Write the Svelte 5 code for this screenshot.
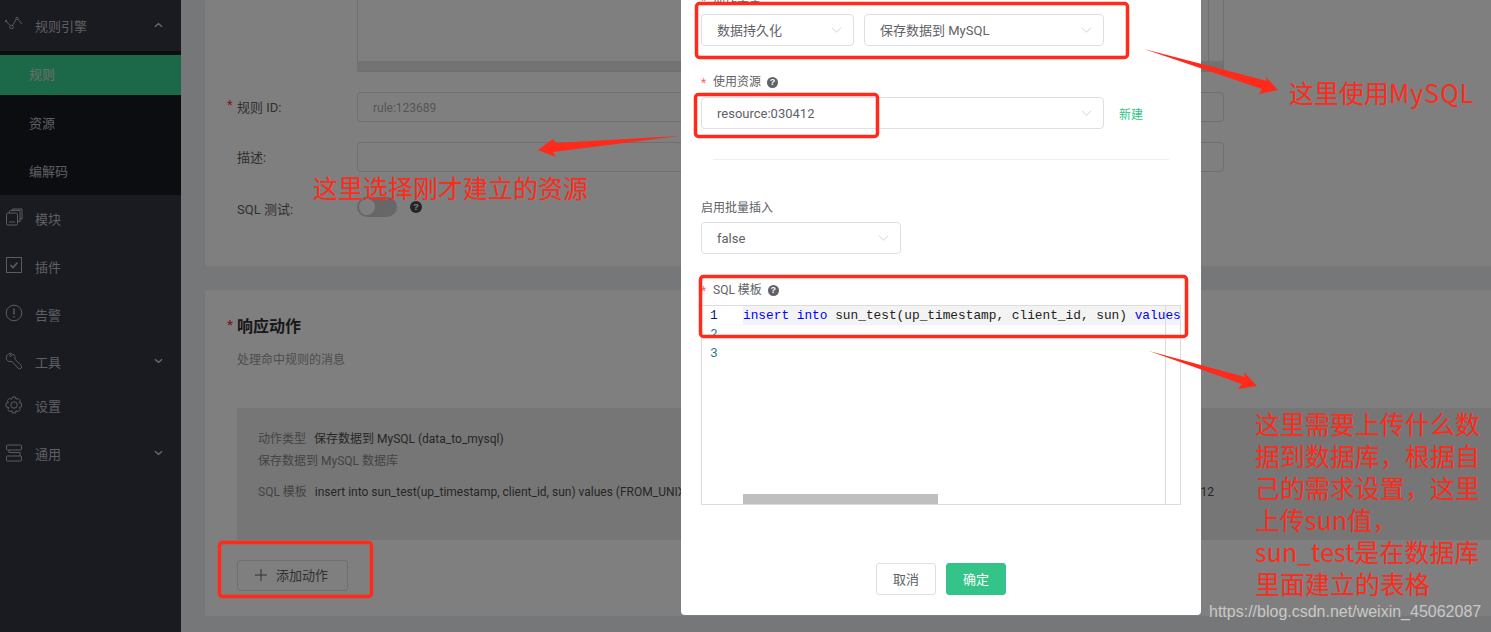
<script>
  const subItems = [
    { label: '规则', active: true },
    { label: '资源' },
    { label: '编解码' }
  ];
  const codeLines = [1, 2, 3];
</script>

<div class="page">
  <aside class="sidebar">
    <div class="nav-item top">
      <svg class="ico" viewBox="0 0 18 18"><path d="M1 5 5 9.500M7.500 9.500 11 3.500M13 3.500 17 8" /><circle cx="6.500" cy="11" r="1.800" /><circle cx="12" cy="2.500" r="1.200" /><circle cx="1" cy="5" r=".8" /></svg>
      <span>规则引擎</span>
      <svg class="caret" viewBox="0 0 10 6"><path d="M1 5 5 1.500 9 5" /></svg>
    </div>
    <div class="submenu">
      {#each subItems as item}
        <div class="sub-item" class:active={item.active}>{item.label}</div>
      {/each}
    </div>
    <div class="nav-item low">
      <svg class="ico" viewBox="0 0 18 18"><rect x="1.500" y="5" width="11" height="12" rx="1.500" /><path d="M4.500 5V3.200Q4.500 2.500 5.500 2.500H15V13.500H12.500M7.500 2.500V1H17V11H15M4 14H10" /></svg>
      <span>模块</span>
    </div>
    <div class="nav-item low">
      <svg class="ico" viewBox="0 0 18 18"><rect x="1.500" y="1.500" width="15" height="15" /><path d="M5.500 9 8 11.500 12.500 6.500" stroke-width="1.600" /></svg>
      <span>插件</span>
    </div>
    <div class="nav-item low">
      <svg class="ico" viewBox="0 0 18 18"><circle cx="9" cy="9" r="7.800" /><path d="M9 4.500v6M9 12v1.500" stroke-width="1.400" /></svg>
      <span>告警</span>
    </div>
    <div class="nav-item short">
      <svg class="ico" viewBox="0 0 18 18"><path d="M6.500 1.200a4.800 4.800 0 0 0-5 6.300A4.800 4.800 0 0 0 7 9.500l6 6.600a2 2 0 0 0 3.200-2.700L10 7.300A5 5 0 0 0 8 2L5.500 4.800 4.500 4 6.500 1.200Z" /></svg>
      <span>工具</span>
      <svg class="caret" viewBox="0 0 10 6"><path d="M1 1 5 4.500 9 1" /></svg>
    </div>
    <div class="nav-item">
      <svg class="ico" viewBox="0 0 18 18"><circle cx="9" cy="9" r="3.200" /><path d="M7.500 1h3l.5 2.300 2-1 2.200 2.200-1 2 2.300.7v3.600l-2.300.7 1 2-2.200 2.200-2-1-.5 2.300h-3l-.5-2.300-2 1-2.200-2.200 1-2L1 10.800V7.200l2.300-.7-1-2 2.200-2.200 2 1Z" /></svg>
      <span>设置</span>
    </div>
    <div class="nav-item">
      <svg class="ico" viewBox="0 0 18 18"><rect x="1.500" y="1" width="15" height="5" rx="1" /><rect x="1.500" y="12" width="15" height="5" rx="1" /><path d="M4 6v2.500h11V12" /></svg>
      <span>通用</span>
      <svg class="caret" viewBox="0 0 10 6"><path d="M1 1 5 4.500 9 1" /></svg>
    </div>
  </aside>

  <main class="main">
    <section class="card first">
      <div class="row sql-row">
        <div class="label"></div>
        <div class="textarea"><div class="ta-bar"></div></div>
      </div>
      <div class="row">
        <div class="label"><i class="star">*</i>规则 ID:</div>
        <div class="input muted">rule:123689</div>
      </div>
      <div class="row">
        <div class="label">描述:</div>
        <div class="input"></div>
      </div>
      <div class="row toggle-row">
        <div class="label">SQL 测试:</div>
        <div class="toggle"><span class="knob"></span></div>
        <span class="help dark">?</span>
      </div>
    </section>

    <section class="card second">
      <h2 class="title"><i class="star">*</i>响应动作</h2>
      <p class="sub">处理命中规则的消息</p>
      <div class="action-box">
        <div class="action-line"><span class="k">动作类型</span><span class="v">保存数据到 MySQL (data_to_mysql)</span></div>
        <div class="action-line desc">保存数据到 MySQL 数据库</div>
        <div class="action-line tmpl">
          <span><span class="k">SQL 模板</span><span class="v">insert into sun_test(up_timestamp, client_id, sun) values (FROM_UNIXTIME(up_timestamp/1000), client_id, sun)</span></span>
          <span class="v end">resource:030412</span>
        </div>
      </div>
      <button class="add-btn"><svg viewBox="0 0 12 12"><path d="M6 0v12M0 6h12" /></svg>添加动作</button>
    </section>
  </main>

  <div class="mask"></div>

  <div class="modal">
    <div class="m-label"><i class="m-star">*</i>动作类型</div>
    <div class="m-row">
      <div class="select w153">数据持久化<svg class="chev" viewBox="0 0 14 8"><path d="M1 1 7 7 13 1" /></svg></div>
      <div class="select w240">保存数据到 MySQL<svg class="chev" viewBox="0 0 14 8"><path d="M1 1 7 7 13 1" /></svg></div>
    </div>
    <div class="m-label res"><i class="m-star">*</i>使用资源<span class="help">?</span></div>
    <div class="m-row center">
      <div class="select w403">resource:030412<svg class="chev" viewBox="0 0 14 8"><path d="M1 1 7 7 13 1" /></svg></div>
      <a class="link" href="#new">新建</a>
    </div>
    <div class="divider"></div>
    <div class="m-label plain">启用批量插入</div>
    <div class="select w200">false<svg class="chev" viewBox="0 0 14 8"><path d="M1 1 7 7 13 1" /></svg></div>
    <div class="m-label sql"><i class="m-star">*</i>SQL 模板<span class="help">?</span></div>
    <div class="editor">
      <div class="gutter">
        {#each codeLines as n}
          <div class:first-no={n === 1}>{n}</div>
        {/each}
      </div>
      <div class="code">
        <div class="code-line"><b>insert</b> <b>into</b> sun_test(up_timestamp, client_id, sun) <b>values</b></div>
        <div class="h-thumb"></div>
      </div>
      <div class="v-track"></div>
    </div>
    <div class="m-foot">
      <button class="btn">取消</button>
      <button class="btn ok">确定</button>
    </div>
  </div>

  <!-- screenshot annotations drawn on top -->
  <svg class="marks" viewBox="0 0 1491 632">
    <g class="boxes">
      <rect x="696.500" y="3.500" width="431" height="54" rx="3" />
      <rect x="695.500" y="94.500" width="182" height="42" rx="3" />
      <rect x="700.500" y="276.500" width="486" height="60" rx="3" />
      <rect x="219.500" y="542.500" width="152" height="54" rx="3" />
    </g>
    <polygon points="1144,49 1267,81 1265,76 1278,90 1259,94 1262,89" />
    <polygon points="679,136 556,143 553,139 538,150 556,157 553,152" />
    <polygon points="1149,351 1245,377 1244,372 1257,386 1238,389 1242,384" />
  </svg>
  <div class="note n1">这里使用<span class="wide">MySQL</span></div>
  <div class="note n2">这里选择刚才建立的资源</div>
  <div class="note n3">这里需要上传什么数据到数据库，根据自己的需求设置，这里上传sun值，<br />sun_test是在数据库里面建立的表格</div>
  <div class="watermark">https://blog.csdn.net/weixin_45062087</div>
</div>

<style>
  :global(body) {
    margin: 0;
    overflow: hidden;
  }
  .page {
    position: relative;
    display: flex;
    height: 632px;
    overflow: hidden;
    font-family: Roboto, "Noto Sans CJK SC", sans-serif;
    font-size: 13px;
    color: #606266;
    background: #edeff1;
  }

  .sidebar {
    width: 181px;
    flex: none;
    padding-top: 3px;
    background: #343740;
    color: #bcbec4;
  }
  .nav-item {
    display: flex;
    align-items: center;
    height: 48px;
    box-sizing: border-box;
    padding: 0 0 4px 5px;
    position: relative;
  }
  .nav-item.short {
    height: 44px;
    margin-top: 2px;
    margin-bottom: -2px;
  }
  .nav-item span {
    margin-left: 12px;
  }
  .nav-item.low span {
    margin-top: 2px;
  }
  .ico {
    width: 18px;
    height: 18px;
    fill: none;
    stroke: #b4b6bc;
    stroke-width: 1;
  }
  .caret {
    position: absolute;
    right: 18px;
    top: 50%;
    margin-top: -5px;
    width: 9px;
    height: 6px;
    fill: none;
    stroke: #d0d2d6;
    stroke-width: 1.500;
  }
  .submenu {
    background: #191b22;
    padding-top: 4px;
  }
  .sub-item {
    height: 48px;
    line-height: 50px;
    padding-left: 29px;
  }
  .sub-item.active {
    height: 40px;
    line-height: 40px;
    margin-bottom: 4px;
    background: #38d392;
    color: #d8dcd8;
  }

  .main {
    flex: 1;
    min-width: 0;
    padding-left: 24px;
    display: flex;
    flex-direction: column;
    gap: 24px;
  }
  .card {
    background: #fff;
    border-radius: 2px 0 0 2px;
  }
  .card.first {
    height: 266px;
    padding-left: 22px;
    box-sizing: border-box;
  }
  .row {
    display: flex;
    align-items: center;
    height: 30px;
    margin-bottom: 20px;
  }
  .sql-row {
    height: 72px;
    margin-bottom: 20px;
    align-items: flex-start;
  }
  .label {
    width: 130px;
    flex: none;
    padding: 0 0 2px 10px;
    box-sizing: border-box;
    position: relative;
    color: #5f5f5f;
  }
  .toggle-row .label {
    padding: 2px 0 0 10px;
  }
  .star {
    position: absolute;
    left: 0;
    top: 0;
    color: #ee3344;
    font-style: normal;
  }
  .textarea {
    width: 867px;
    height: 72px;
    box-sizing: border-box;
    border: 1px solid #dcdfe6;
    border-top: 0;
    position: relative;
  }
  .ta-bar {
    position: absolute;
    left: 0;
    right: 0;
    bottom: 0;
    height: 10px;
    background: #e4e4e4;
  }
  .textarea::after {
    content: "";
    position: absolute;
    right: 14px;
    top: 0;
    bottom: 0;
    width: 1px;
    background: #dcdfe6;
  }
  .input {
    width: 867px;
    height: 30px;
    box-sizing: border-box;
    border: 1px solid #dcdfe6;
    border-radius: 4px;
    padding-left: 15px;
    line-height: 31px;
    font-size: 12px;
  }
  .input.muted {
    color: #a8abb2;
  }
  .toggle-row {
    margin-top: 10px;
  }
  .toggle {
    width: 40px;
    height: 20px;
    border-radius: 10px;
    background: #cfcfcf;
    position: relative;
  }
  .knob {
    position: absolute;
    left: 2px;
    top: 2px;
    width: 16px;
    height: 16px;
    border-radius: 50%;
    background: #fff;
  }
  .help {
    display: inline-block;
    width: 11px;
    height: 11px;
    margin-left: 6px;
    border-radius: 50%;
    background: #5f6266;
    color: #fff;
    font-size: 9px;
    line-height: 11px;
    text-align: center;
    font-family: "Liberation Sans", sans-serif;
    font-weight: 700;
  }
  .help.dark {
    margin-left: 13px;
    width: 12px;
    height: 12px;
    line-height: 12px;
    background: #4a4a4e;
  }

  .card.second {
    height: 326px;
    padding: 26px 0 0 32px;
    box-sizing: border-box;
  }
  .title {
    position: relative;
    margin: 0;
    font-size: 16px;
    line-height: 21px;
    font-weight: 700;
    color: #303133;
  }
  .title .star {
    left: -10px;
    font-size: 13px;
    top: -2px;
  }
  .sub {
    margin: 14px 0 0;
    font-size: 12px;
    line-height: 18px;
    color: #9a9a9a;
  }
  .action-box {
    margin-top: 39px;
    height: 132px;
    padding: 21px 0 0 21px;
    box-sizing: border-box;
    background: #ededed;
    font-size: 12px;
    color: #888;
  }
  .action-line {
    line-height: 20px;
    height: 20px;
    white-space: nowrap;
  }
  .action-line.desc {
    margin-top: 2px;
  }
  .action-line.tmpl {
    margin-top: 11px;
    width: 956px;
    display: flex;
    justify-content: space-between;
    overflow: hidden;
  }
  .k {
    margin-right: 8px;
  }
  .v {
    color: #4d4d4d;
  }
  .add-btn {
    display: flex;
    align-items: center;
    margin-top: 20px;
    width: 111px;
    height: 31px;
    padding: 0 0 2px 17px;
    box-sizing: border-box;
    background: #fff;
    border: 1px solid #dcdfe6;
    border-radius: 3px;
    font: inherit;
    font-size: 13px;
    color: #606266;
  }
  .add-btn svg {
    width: 12px;
    height: 12px;
    margin-right: 9px;
    stroke: #606266;
    fill: none;
  }

  .mask {
    position: absolute;
    inset: 0;
    background: rgba(0, 0, 0, 0.5);
  }

  .modal {
    position: absolute;
    left: 681px;
    top: -20px;
    width: 520px;
    height: 635px;
    box-sizing: border-box;
    padding: 12px 20px 0;
    background: #fff;
    border-radius: 0 0 4px 4px;
    display: flex;
    flex-direction: column;
    align-items: flex-start;
  }
  .m-label {
    position: relative;
    padding-left: 12px;
    height: 16px;
    line-height: 16px;
    font-size: 12px;
    color: #606266;
    display: flex;
    align-items: center;
  }
  .m-star {
    position: absolute;
    left: 0;
    top: 1px;
    font-style: normal;
    color: #f56c6c;
  }
  .m-label.plain {
    padding-left: 0;
    margin-top: 40px;
  }
  .m-label.res {
    margin-top: 28px;
  }
  .m-label.sql {
    margin-top: 28px;
  }
  .m-row {
    display: flex;
    gap: 10px;
    margin-top: 6px;
  }
  .m-row.center {
    align-items: center;
    gap: 15px;
    margin-top: 7px;
  }
  .select {
    position: relative;
    height: 32px;
    box-sizing: border-box;
    border: 1px solid #dcdfe6;
    border-radius: 4px;
    padding-left: 15px;
    line-height: 32px;
    font-size: 13px;
    color: #606266;
  }
  .w153 {
    width: 153px;
  }
  .w240 {
    width: 240px;
  }
  .w403 {
    width: 403px;
  }
  .w200 {
    width: 200px;
    margin-top: 6px;
  }
  .chev {
    position: absolute;
    right: 11px;
    top: 12px;
    width: 11px;
    height: 6px;
    fill: none;
    stroke: #c0c4cc;
  }
  .link {
    color: #34c388;
    text-decoration: none;
    font-size: 12px;
  }
  .divider {
    width: 456px;
    height: 1px;
    margin: 30px 0 0 12px;
    background: #ebeef5;
  }
  .editor {
    position: relative;
    display: flex;
    width: 480px;
    height: 200px;
    margin-top: 7px;
    box-sizing: border-box;
    border: 1px solid #dcdcdc;
    font-family: "Liberation Mono", "DejaVu Sans Mono", monospace;
    font-size: 12.800px;
    line-height: 19px;
    color: #222;
  }
  .gutter {
    width: 41px;
    flex: none;
    padding-left: 8px;
    box-sizing: border-box;
    color: #237893;
  }
  .first-no {
    color: #0b216f;
  }
  .code {
    flex: 1;
    min-width: 0;
    position: relative;
  }
  .code-line {
    height: 19px;
    background: #f3f3f3;
    white-space: nowrap;
    overflow: hidden;
  }
  .code-line b {
    font-weight: 400;
    color: #0000ff;
  }
  .h-thumb {
    position: absolute;
    left: 0;
    bottom: 0;
    width: 195px;
    height: 10px;
    background: #bfbfbf;
  }
  .v-track {
    position: absolute;
    right: 14px;
    top: 0;
    bottom: 0;
    width: 1px;
    background: #dcdcdc;
  }
  .m-foot {
    display: flex;
    justify-content: center;
    gap: 10px;
    width: 100%;
    margin-top: 58px;
  }
  .btn {
    width: 60px;
    height: 32px;
    padding: 0 0 2px;
    box-sizing: border-box;
    background: #fff;
    border: 1px solid #dcdfe6;
    border-radius: 3px;
    font: inherit;
    font-size: 13px;
    color: #606266;
  }
  .btn.ok {
    background: #34c388;
    border-color: #34c388;
    color: #fff;
  }

  .marks {
    position: absolute;
    left: 0;
    top: 0;
    width: 1491px;
    height: 632px;
    fill: #ff2a1a;
  }
  .boxes rect {
    fill: none;
    stroke: #ff2a1a;
    stroke-width: 3.500;
  }
  .note {
    position: absolute;
    color: #ff2a1a;
    font-size: 25px;
    line-height: 32px;
    font-family: "Noto Sans CJK SC", sans-serif;
    white-space: nowrap;
  }
  .wide {
    letter-spacing: 1px;
  }
  .n1 {
    left: 1289px;
    top: 76px;
  }
  .n2 {
    left: 313px;
    top: 171px;
  }
  .n3 {
    left: 1255px;
    top: 407px;
    width: 228px;
    white-space: normal;
    word-break: break-all;
  }
  .watermark {
    position: absolute;
    left: 1209px;
    top: 602px;
    font-family: "Liberation Sans", sans-serif;
    font-size: 16px;
    line-height: 20px;
    color: #c8c8c8;
    white-space: nowrap;
  }
</style>
